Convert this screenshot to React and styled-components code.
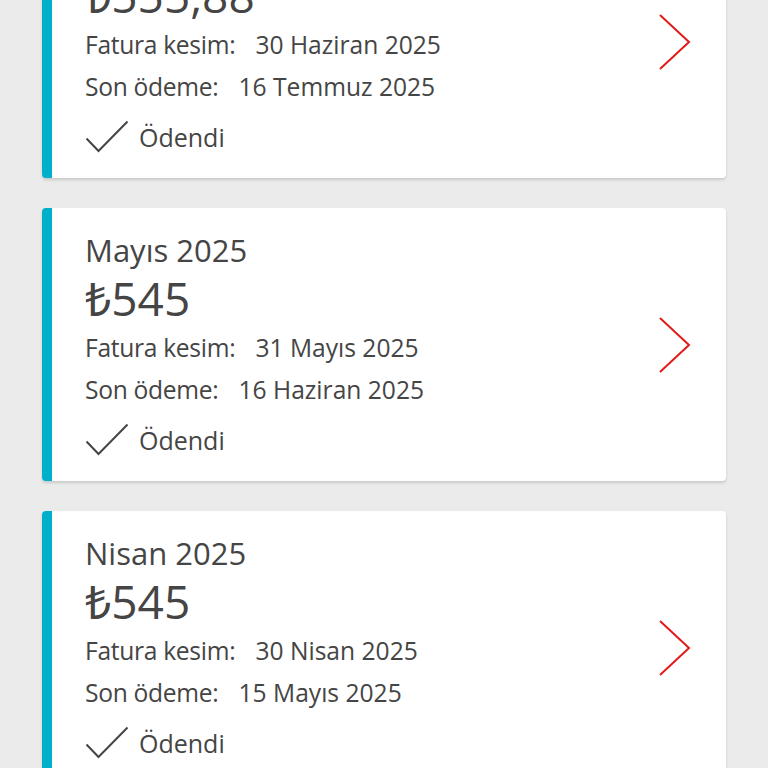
import styled, { createGlobalStyle } from "styled-components";

const GlobalStyle = createGlobalStyle`
  html, body {
    margin: 0;
    padding: 0;
    background: #ebebeb;
    font-family: "Open Sans", "Noto Sans", sans-serif;
    color: #454545;
  }
  body {
    overflow: hidden;
  }
`;

const List = styled.div`
  display: flex;
  flex-direction: column;
  gap: 30px;
  margin-top: -95px;
  padding: 0 42px;
`;

const Card = styled.div`
  display: flex;
  align-items: center;
  justify-content: space-between;
  height: 273px;
  box-sizing: border-box;
  background: #fff;
  border-left: 10px solid #00b0ca;
  border-radius: 4px;
  box-shadow: 0 2px 3px rgba(0, 0, 0, 0.14);
  padding: 0 34px 0 33px;
`;

const Body = styled.div`
  display: flex;
  flex-direction: column;
  align-self: stretch;
  padding-top: 22px;
`;

const Month = styled.div`
  font-size: 31px;
  line-height: 40px;
`;

const Amount = styled.div`
  font-size: 46px;
  line-height: 56px;
`;

const Detail = styled.div`
  font-size: 24.6px;
  line-height: 42px;
  margin-top: ${(p) => (p.$first ? "1px" : "0")};
  white-space: nowrap;
`;

const Label = styled.span`
  letter-spacing: -0.3px;
  margin-right: 14px;
`;

const Status = styled.div`
  display: flex;
  align-items: center;
  gap: 10px;
  font-size: 25px;
  line-height: 50px;
  margin-top: 4px;
`;

const Chevron = styled.svg`
  width: 34px;
  height: 58px;
  flex-shrink: 0;
`;

const Check = () => (
  <svg width="44" height="34" viewBox="0 0 44 34">
    <path d="M1.5 18.5 L13.5 31 L42.5 1.5" fill="none" stroke="#454545" strokeWidth="2" />
  </svg>
);

const bills = [
  { month: "Haziran 2025", amount: "₺555,88", cut: "30 Haziran 2025", due: "16 Temmuz 2025" },
  { month: "Mayıs 2025", amount: "₺545", cut: "31 Mayıs 2025", due: "16 Haziran 2025" },
  { month: "Nisan 2025", amount: "₺545", cut: "30 Nisan 2025", due: "15 Mayıs 2025" },
];

export default function App() {
  return (
    <>
      <GlobalStyle />
      <List>
        {bills.map((b) => (
          <Card key={b.month}>
            <Body>
              <Month>{b.month}</Month>
              <Amount>{b.amount}</Amount>
              <Detail $first>
                <Label>Fatura kesim: </Label>
                {b.cut}
              </Detail>
              <Detail>
                <Label>Son ödeme: </Label>
                {b.due}
              </Detail>
              <Status>
                <Check />
                Ödendi
              </Status>
            </Body>
            <Chevron viewBox="0 0 34 58">
              <path d="M2 2 L31 29 L2 56" fill="none" stroke="#e21a1a" strokeWidth="2" />
            </Chevron>
          </Card>
        ))}
      </List>
    </>
  );
}
